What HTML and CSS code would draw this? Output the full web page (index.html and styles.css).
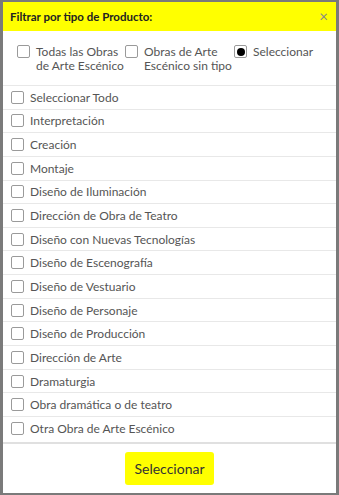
FILE: index.html
```html
<!DOCTYPE html>
<html lang="es">
<head>
<meta charset="utf-8">
<link rel="stylesheet" href="styles.css">
</head>
<body>
<div class="modal">
  <div class="header">
    <span class="title">Filtrar por tipo de Producto:</span>
    <span class="close">×</span>
  </div>
  <div class="options">
    <label class="opt"><span class="box"></span><span>Todas las Obras de Arte Escénico</span></label>
    <label class="opt"><span class="box"></span><span>Obras de Arte Escénico sin tipo</span></label>
    <label class="opt"><span class="box radio"><span class="dot"></span></span><span>Seleccionar</span></label>
  </div>
  <ul class="list">
    <li><span class="box"></span>Seleccionar Todo</li>
    <li><span class="box"></span>Interpretación</li>
    <li><span class="box"></span>Creación</li>
    <li><span class="box"></span>Montaje</li>
    <li><span class="box"></span>Diseño de Iluminación</li>
    <li><span class="box"></span>Dirección de Obra de Teatro</li>
    <li><span class="box"></span>Diseño con Nuevas Tecnologías</li>
    <li><span class="box"></span>Diseño de Escenografía</li>
    <li><span class="box"></span>Diseño de Vestuario</li>
    <li><span class="box"></span>Diseño de Personaje</li>
    <li><span class="box"></span>Diseño de Producción</li>
    <li><span class="box"></span>Dirección de Arte</li>
    <li><span class="box"></span>Dramaturgia</li>
    <li><span class="box"></span>Obra dramática o de teatro</li>
    <li><span class="box"></span>Otra Obra de Arte Escénico</li>
  </ul>
  <div class="footer">
    <button class="btn">Seleccionar</button>
  </div>
</div>
</body>
</html>
```
FILE: styles.css
```css
html, body {
  margin: 0;
  padding: 0;
}
body {
  background: #7a7a7a;
  font-family: "Lato", "Liberation Sans", sans-serif;
  font-size: 12px;
  color: #555;
  padding: 2px 3px 2px 3px;
  height: 495px;
  box-sizing: border-box;
}
.modal {
  background: #fff;
  width: 333px;
  height: 491px;
  display: flex;
  flex-direction: column;
}
.header {
  background: #ffff00;
  height: 29px;
  flex: none;
  display: flex;
  align-items: center;
  justify-content: space-between;
  padding: 0 8px 0 7px;
}
.title {
  font-weight: bold;
  color: #222;
  font-size: 11.5px;
}
.close {
  color: #888;
  font-size: 15px;
  line-height: 1;
}
.options {
  height: 55px;
  flex: none;
  box-sizing: border-box;
  border-bottom: 1px solid #e8e8e8;
  display: flex;
  padding: 14px 0 0 14px;
}
.opt {
  display: flex;
  align-items: flex-start;
  line-height: 13.5px;
}
.opt:nth-child(1) { width: 108px; }
.opt:nth-child(2) { width: 109px; }
.opt .box { margin: 0 6px 0 0; }
.box {
  width: 11px;
  height: 11px;
  border: 1px solid #9a9a9a;
  border-radius: 2px;
  background: #fff;
  flex: none;
  display: flex;
  align-items: center;
  justify-content: center;
}
.dot {
  width: 8px;
  height: 8px;
  border-radius: 50%;
  background: #000;
}
.list {
  list-style: none;
  margin: 0;
  padding: 0;
  flex: 1;
}
.list li {
  height: 23.65px;
  box-sizing: border-box;
  border-bottom: 1px solid #e8e8e8;
  display: flex;
  align-items: center;
  padding-left: 8px;
}
.list li .box { margin-right: 6px; }
.list li:last-child {
  border-bottom: none;
}
.footer {
  height: 51px;
  flex: none;
  box-sizing: border-box;
  border-top: 2px solid #e0e0e0;
  display: flex;
  justify-content: center;
  align-items: center;
}
.btn {
  background: #ffff00;
  border: none;
  border-radius: 3px;
  width: 89px;
  height: 33px;
  font-family: "Lato", "Liberation Sans", sans-serif;
  font-size: 14px;
  color: #333;
  padding: 0;
}
```
